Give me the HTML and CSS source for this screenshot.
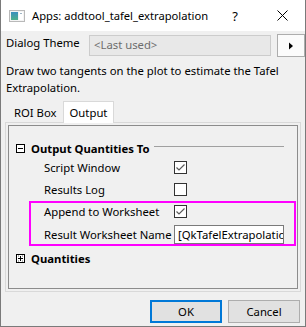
FILE: index.html
```html
<!DOCTYPE html>
<html>
<head>
<meta charset="utf-8">
<link rel="stylesheet" href="styles.css">
</head>
<body>
<div class="window">
  <div class="titlebar">
    <svg class="appicon" width="16" height="12" viewBox="0 0 16 12">
      <defs>
        <linearGradient id="g" x1="0" y1="0" x2="0" y2="1">
          <stop offset="0" stop-color="#3b8fbf"/>
          <stop offset="1" stop-color="#4fb08a"/>
        </linearGradient>
      </defs>
      <rect x="0.5" y="0.5" width="15" height="11" fill="#f4f4f4" stroke="#b9b9b9"/>
      <rect x="2" y="2" width="7" height="8" fill="url(#g)"/>
      <rect x="10" y="2" width="4" height="8" fill="#ffffff"/>
      <rect x="11" y="3" width="2" height="1" fill="#9fb5c5"/>
    </svg>
    <span class="title">Apps: addtool_tafel_extrapolation</span>
    <span class="help">?</span>
    <svg class="close" width="11" height="11" viewBox="0 0 11 11">
      <path d="M0.5 0.5 L10.5 10.5 M10.5 0.5 L0.5 10.5" stroke="#000" stroke-width="1" fill="none"/>
    </svg>
  </div>
  <div class="content">
    <div class="theme-row">
      <span class="theme-label">Dialog Theme</span>
      <div class="combo">&lt;Last used&gt;</div>
      <div class="arrow-btn">
        <svg width="6" height="8" viewBox="0 0 6 8"><path d="M1 0.5 L5 4 L1 7.5 Z" fill="#000"/></svg>
      </div>
    </div>
    <p class="desc">Draw two tangents on the plot to estimate the Tafel Extrapolation.</p>
    <div class="tabs">
      <div class="tab">ROI Box</div>
      <div class="tab active">Output</div>
    </div>
    <div class="panel">
      <div class="panel-inner">
        <div class="section-head">
          <svg class="toggle" width="9" height="9" viewBox="0 0 9 9">
            <rect x="0.5" y="0.5" width="8" height="8" fill="#fff" stroke="#000"/>
            <path d="M2 4.5 H7" stroke="#000"/>
          </svg>
          <span class="section-title">Output Quantities To</span>
          <span class="rule"></span>
        </div>
        <div class="row">
          <span class="label">Script Window</span>
          <span class="check">
            <svg width="11" height="11" viewBox="0 0 11 11"><path d="M1.5 5.5 L4 8 L9.5 2.5" stroke="#5a5a5a" stroke-width="1.2" fill="none"/></svg>
          </span>
        </div>
        <div class="row">
          <span class="label">Results Log</span>
          <span class="check"></span>
        </div>
        <div class="highlight">
          <div class="row hl-row">
            <span class="label">Append to Worksheet</span>
            <span class="check">
              <svg width="11" height="11" viewBox="0 0 11 11"><path d="M1.5 5.5 L4 8 L9.5 2.5" stroke="#5a5a5a" stroke-width="1.2" fill="none"/></svg>
            </span>
          </div>
          <div class="row hl-row input-row">
            <span class="label">Result Worksheet Name</span>
            <div class="textbox">[QkTafelExtrapolation]</div>
          </div>
        </div>
        <div class="section-head quantities">
          <svg class="toggle" width="9" height="9" viewBox="0 0 9 9">
            <rect x="0.5" y="0.5" width="8" height="8" fill="#fff" stroke="#000"/>
            <path d="M2 4.5 H7 M4.5 2 V7" stroke="#000"/>
            <path d="M2 2 h1 M6 2 h1 M2 7 h1 M6 7 h1" stroke="#666" stroke-width="1"/>
          </svg>
          <span class="section-title">Quantities</span>
        </div>
      </div>
    </div>
    <div class="buttons">
      <div class="btn default">OK</div>
      <div class="btn">Cancel</div>
    </div>
  </div>
</div>
</body>
</html>
```

FILE: styles.css
```css
html, body {
  margin: 0;
  padding: 0;
  background: #f0f0f0;
}
body {
  font-family: "Segoe UI", "Noto Sans", sans-serif;
  font-size: 11.3px;
  color: #000;
}
.window {
  width: 306px;
  height: 327px;
  box-sizing: border-box;
  border: 1px solid #7a7a7a;
  border-top: none;
  background: #f0f0f0;
  overflow: hidden;
}
.titlebar {
  height: 31px;
  background: #fff;
  display: flex;
  align-items: center;
  position: relative;
}
.appicon {
  margin-left: 8px;
  margin-right: 7px;
  flex: none;
}
.title {
  font-size: 11.2px;
  line-height: 16px;
  white-space: nowrap;
}
.help {
  margin-left: auto;
  font-size: 13px;
  margin-right: 39px;
}
.close {
  margin-right: 17px;
}
.content {
  padding: 3px 0 0 4px;
}
.theme-row {
  display: flex;
  align-items: flex-start;
  height: 23px;
}
.theme-label {
  width: 83px;
  padding-left: 1px;
  line-height: 17px;
}
.combo {
  margin-top: 1px;
  width: 182px;
  height: 21px;
  box-sizing: border-box;
  border: 1px solid #cccccc;
  background: #e8e8e8;
  color: #6d6d6d;
  padding-left: 4px;
  line-height: 18px;
}
.arrow-btn {
  margin-left: 6px;
  width: 28px;
  height: 23px;
  box-sizing: border-box;
  border: 1px solid #adadad;
  background: #fbfbfb;
  display: flex;
  align-items: center;
  justify-content: center;
}
.desc {
  margin: 5px 0 0 1px;
  line-height: 17px;
  width: 290px;
}
.tabs {
  display: flex;
  margin-top: 6px;
  margin-left: 4px;
  height: 20px;
  align-items: flex-end;
  position: relative;
  z-index: 1;
}
.tab {
  height: 18px;
  line-height: 18px;
  padding: 0 5px;
}
.tab.active {
  height: 21px;
  line-height: 21px;
  background: #fff;
  border: 1px solid #d9d9d9;
  border-bottom: none;
  padding: 0 6px;
  margin-bottom: -1px;
  margin-left: 1px;
}
.panel {
  width: 296px;
  height: 170px;
  box-sizing: border-box;
  border: 1px solid #d9d9d9;
  padding: 2px;
}
.panel-inner {
  height: 100%;
  box-sizing: border-box;
  border: 1px solid #8c8c8c;
  padding-top: 14px;
}
.section-head {
  display: flex;
  align-items: center;
  height: 16px;
  padding-left: 7px;
}
.toggle {
  flex: none;
  margin-right: 6px;
}
.section-title {
  font-weight: bold;
  white-space: nowrap;
}
.rule {
  flex: 1;
  height: 0;
  border-top: 1px solid #a0a0a0;
  margin: 0 13px 0 4px;
  position: relative;
  top: -2px;
}
.row {
  display: flex;
  align-items: center;
  height: 22px;
  padding-left: 35px;
}
.label {
  width: 130px;
  flex: none;
  white-space: nowrap;
}
.check {
  width: 13px;
  height: 13px;
  box-sizing: border-box;
  border: 1px solid #333;
  background: #fff;
  display: flex;
  align-items: center;
  justify-content: center;
}
.highlight {
  margin: 1px 0 0 20px;
  width: 267px;
  height: 45px;
  box-sizing: border-box;
  border: 2px solid #ff00ff;
}
.hl-row {
  padding-left: 13px;
  height: 17px;
}
.input-row {
  height: 24px;
  box-sizing: border-box;
  padding-top: 5px;
}
.textbox {
  width: 110px;
  height: 19px;
  box-sizing: border-box;
  border: 1px solid #7a7a7a;
  background: #fff;
  padding-left: 3px;
  line-height: 17px;
  overflow: hidden;
  white-space: nowrap;
}
.quantities {
  margin-top: 4px;
}
.buttons {
  display: flex;
  justify-content: flex-end;
  gap: 6px;
  margin-top: 8px;
  padding-right: 5px;
}
.btn {
  width: 72px;
  height: 23px;
  box-sizing: border-box;
  border: 1px solid #adadad;
  background: #e1e1e1;
  text-align: center;
  line-height: 21px;
}
.btn.default {
  border: 2px solid #0078d7;
  line-height: 19px;
}
```
